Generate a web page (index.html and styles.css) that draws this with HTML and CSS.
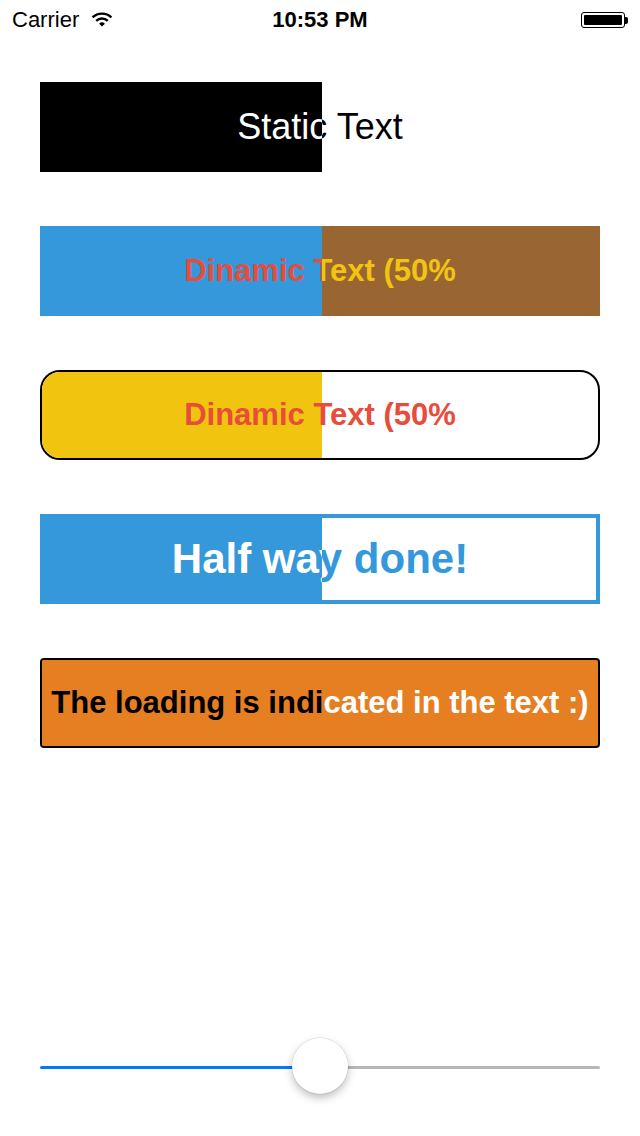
FILE: index.html
```html
<!DOCTYPE html>
<html>
<head>
<meta charset="utf-8">
<link rel="stylesheet" href="styles.css">
</head>
<body>
<div class="screen">
  <div class="status">
    <div class="status-left">
      <span class="carrier">Carrier</span>
      <svg class="wifi" width="22" height="16" viewBox="0 0 22 16">
        <path d="M1.6 6.4 A13.5 13.5 0 0 1 20.4 6.4" fill="none" stroke="#000" stroke-width="2.4"/>
        <path d="M5.2 9.9 A8.3 8.3 0 0 1 16.8 9.9" fill="none" stroke="#000" stroke-width="2.4"/>
        <path d="M11 15.6 L8.1 12.7 A4.2 4.2 0 0 1 13.9 12.7 Z" fill="#000"/>
      </svg>
    </div>
    <div class="time">10:53 PM</div>
    <div class="status-right">
      <div class="battery"><div class="battery-level"></div></div>
      <div class="battery-nub"></div>
    </div>
  </div>

  <div class="bars">
    <div class="bar bar-static">
      <span class="label">Static Text</span>
      <div class="fill" style="--p: 50.36%"><span class="label">Static Text</span></div>
    </div>
    <div class="bar bar-dynamic">
      <span class="label">Dinamic Text (50%</span>
      <div class="fill" style="--p: 50.36%"><span class="label">Dinamic Text (50%</span></div>
    </div>
    <div class="bar bar-rounded">
      <span class="label">Dinamic Text (50%</span>
      <div class="fill" style="--p: 50.36%"><span class="label">Dinamic Text (50%</span></div>
    </div>
    <div class="bar bar-outline">
      <span class="label">Half way done!</span>
      <div class="fill" style="--p: 50.36%"><span class="label">Half way done!</span></div>
    </div>
    <div class="bar bar-text">
      <span class="label">The loading is indicated in the text :)</span>
      <div class="fill" style="--p: 50.36%"><span class="label">The loading is indicated in the text :)</span></div>
    </div>
  </div>

  <div class="slider">
    <div class="track">
      <div class="track-min" style="width: 50%"></div>
      <div class="track-max"></div>
    </div>
    <div class="thumb" style="left: 50%"></div>
  </div>
</div>
</body>
</html>
```

FILE: styles.css
```css
html, body {
  margin: 0;
  padding: 0;
  background: #fff;
}

.screen {
  width: 640px;
  height: 1136px;
  display: flex;
  flex-direction: column;
  font-family: "Liberation Sans", Arial, sans-serif;
  color: #000;
  overflow: hidden;
}

/* status bar */
.status {
  height: 40px;
  display: flex;
  align-items: center;
  justify-content: space-between;
  padding: 0 12px 0 12px;
  position: relative;
}

.status-left {
  display: flex;
  align-items: center;
  gap: 12px;
  font-size: 22px;
}

.wifi {
  margin-top: -2px;
}

.time {
  position: absolute;
  left: 0;
  right: 0;
  text-align: center;
  font-size: 22px;
  font-weight: bold;
  pointer-events: none;
}

.status-right {
  display: flex;
  align-items: center;
}

.battery {
  width: 44px;
  height: 16px;
  box-sizing: border-box;
  border: 1.5px solid #000;
  border-radius: 3px;
  padding: 2px;
}

.battery-level {
  width: 100%;
  height: 100%;
  background: #000;
  border-radius: 1px;
}

.battery-nub {
  width: 3px;
  height: 7px;
  background: #000;
  border-radius: 0 2px 2px 0;
}

/* bars */
.bars {
  display: flex;
  flex-direction: column;
  gap: 54px;
  padding: 42px 40px 0 40px;
}

.bar {
  position: relative;
  height: 90px;
  box-sizing: border-box;
  display: flex;
  align-items: center;
  justify-content: center;
  overflow: hidden;
}

.fill {
  position: absolute;
  inset: 0;
  display: flex;
  align-items: center;
  justify-content: center;
  clip-path: inset(0 calc(100% - var(--p)) 0 0);
}

.label {
  white-space: nowrap;
}

/* 1: static */
.bar-static {
  background: #fff;
  color: #000;
  font-size: 36px;
}
.bar-static .fill {
  background: #000;
  color: #fff;
}

/* 2: dynamic */
.bar-dynamic {
  background: #996633;
  color: #f1c40f;
  font-size: 31px;
  font-weight: bold;
}
.bar-dynamic .fill {
  background: #3498db;
  color: #e74c3c;
}

/* 3: rounded */
.bar-rounded {
  background: #fff;
  color: #e74c3c;
  border: 2px solid #000;
  border-radius: 20px;
  font-size: 31px;
  font-weight: bold;
}
.bar-rounded .fill {
  background: #f1c40f;
  color: #e74c3c;
}

/* 4: outline */
.bar-outline {
  background: #fff;
  color: #3498db;
  box-shadow: inset 0 0 0 4px #3498db;
  font-size: 42px;
  font-weight: bold;
}
.bar-outline .fill {
  background: #3498db;
  color: #fff;
}

/* 5: text only */
.bar-text {
  background: #e67e22;
  color: #fff;
  border: 2px solid #000;
  border-radius: 4px;
  font-size: 31px;
  font-weight: bold;
}
.bar-text .fill {
  background: #e67e22;
  color: #000;
}

/* slider */
.slider {
  margin-top: auto;
  margin-bottom: 42px;
  margin-left: 40px;
  margin-right: 40px;
  height: 56px;
  position: relative;
  display: flex;
  align-items: center;
}

.track {
  width: 100%;
  height: 3px;
  margin-top: 3px;
  display: flex;
}

.track-min {
  background: #007aff;
  border-radius: 2px 0 0 2px;
}

.track-max {
  flex: 1;
  background: #b7b7b7;
  border-radius: 0 2px 2px 0;
}

.thumb {
  position: absolute;
  top: 0;
  width: 56px;
  height: 56px;
  margin-left: -28px;
  border-radius: 50%;
  background: #fff;
  box-shadow: 0 0 0 0.5px rgba(0,0,0,0.12), 0 4px 8px rgba(0,0,0,0.25);
}
```
